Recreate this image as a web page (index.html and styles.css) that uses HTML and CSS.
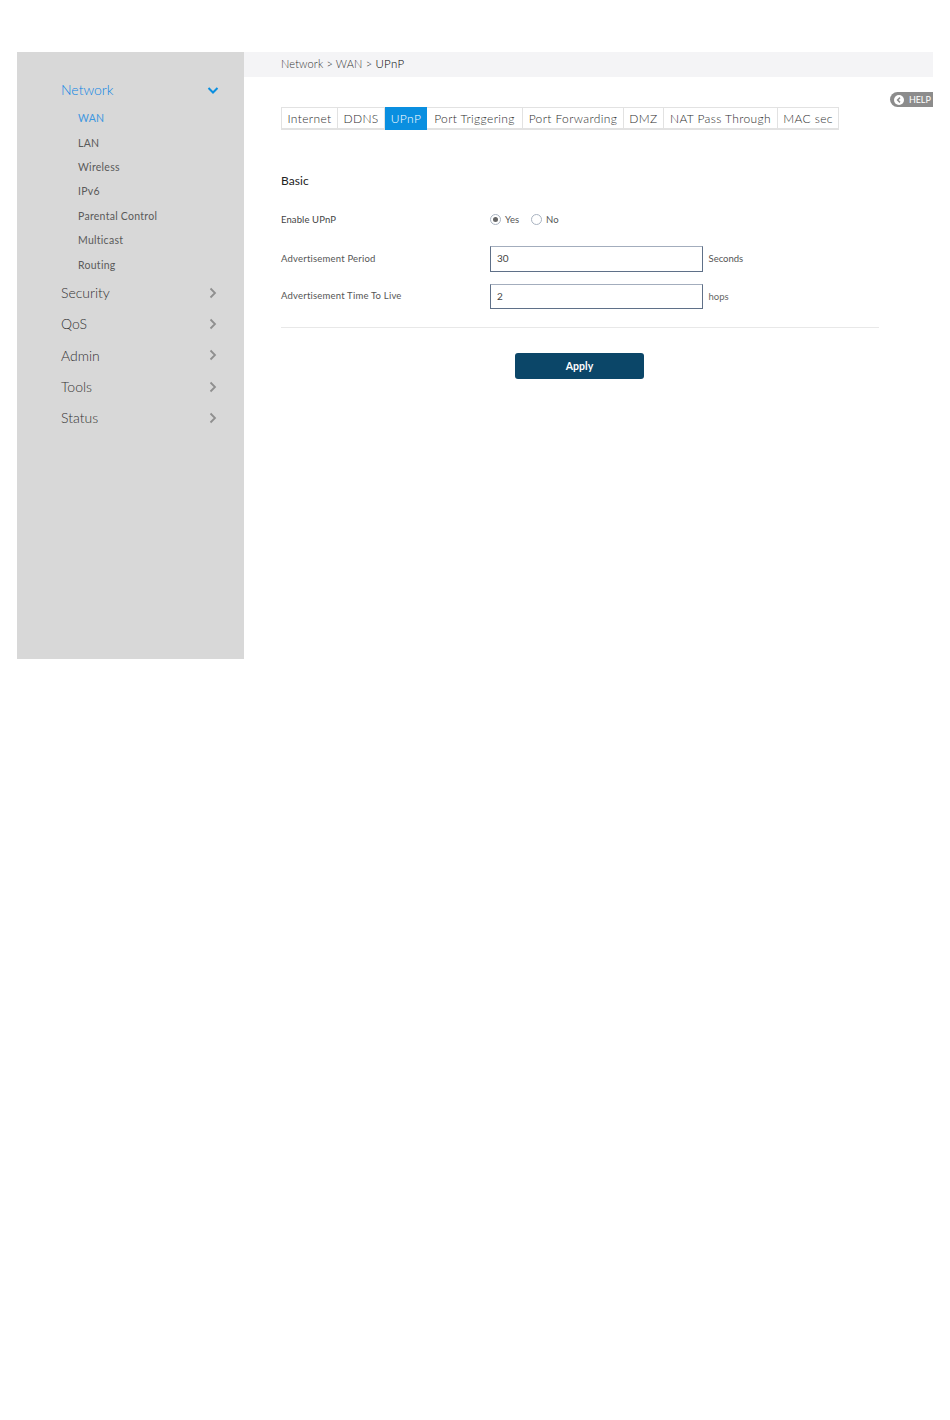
FILE: index.html
```html
<!DOCTYPE html>
<html lang="en">
<head>
<meta charset="utf-8">
<title>UPnP</title>
<link rel="stylesheet" href="styles.css">
</head>
<body>
<div class="shell">
  <nav class="sidebar">
    <div class="nav-top active"><span>Network</span>
      <svg class="chev" width="12" height="12" viewBox="0 0 12 12"><path d="M1.5 4 L6 8.5 L10.5 4" fill="none" stroke="#0a8fe0" stroke-width="2"/></svg>
    </div>
    <ul class="subnav">
      <li class="active">WAN</li>
      <li>LAN</li>
      <li>Wireless</li>
      <li>IPv6</li>
      <li>Parental Control</li>
      <li>Multicast</li>
      <li>Routing</li>
    </ul>
    <div class="nav-top"><span>Security</span><svg class="chev" width="12" height="12" viewBox="0 0 12 12"><path d="M3.5 1.5 L8 6 L3.5 10.5" fill="none" stroke="#8f8f8f" stroke-width="1.8"/></svg></div>
    <div class="nav-top"><span>QoS</span><svg class="chev" width="12" height="12" viewBox="0 0 12 12"><path d="M3.5 1.5 L8 6 L3.5 10.5" fill="none" stroke="#8f8f8f" stroke-width="1.8"/></svg></div>
    <div class="nav-top"><span>Admin</span><svg class="chev" width="12" height="12" viewBox="0 0 12 12"><path d="M3.5 1.5 L8 6 L3.5 10.5" fill="none" stroke="#8f8f8f" stroke-width="1.8"/></svg></div>
    <div class="nav-top"><span>Tools</span><svg class="chev" width="12" height="12" viewBox="0 0 12 12"><path d="M3.5 1.5 L8 6 L3.5 10.5" fill="none" stroke="#8f8f8f" stroke-width="1.8"/></svg></div>
    <div class="nav-top"><span>Status</span><svg class="chev" width="12" height="12" viewBox="0 0 12 12"><path d="M3.5 1.5 L8 6 L3.5 10.5" fill="none" stroke="#8f8f8f" stroke-width="1.8"/></svg></div>
  </nav>
  <main class="main">
    <div class="crumbs">Network &gt; WAN &gt; <b>UPnP</b></div>
    <div class="help">
      <svg width="10" height="10" viewBox="0 0 10 10"><circle cx="5" cy="5" r="5" fill="#fff"/><path d="M6 2.6 L3.6 5 L6 7.4" fill="none" stroke="#8c8c8c" stroke-width="1.5"/></svg>
      <span>HELP</span>
    </div>
    <div class="content">
      <div class="tabs">
        <div class="tab t1">Internet</div>
        <div class="tab t2">DDNS</div>
        <div class="tab t3 on">UPnP</div>
        <div class="tab t4">Port Triggering</div>
        <div class="tab t5">Port Forwarding</div>
        <div class="tab t6">DMZ</div>
        <div class="tab t7">NAT Pass Through</div>
        <div class="tab t8">MAC sec</div>
      </div>
      <h2 class="section">Basic</h2>
      <div class="row row-radio">
        <label class="lbl dark">Enable UPnP</label>
        <div class="radios">
          <span class="radio checked"></span><span class="rtext">Yes</span>
          <span class="radio"></span><span class="rtext">No</span>
        </div>
      </div>
      <div class="row row-a">
        <label class="lbl">Advertisement Period</label>
        <div class="field">30</div>
        <span class="unit">Seconds</span>
      </div>
      <div class="row row-b">
        <label class="lbl">Advertisement Time To Live</label>
        <div class="field short">2</div>
        <span class="unit muted">hops</span>
      </div>
      <hr class="rule">
      <div class="actions"><button class="apply" type="button">Apply</button></div>
    </div>
  </main>
</div>
</body>
</html>
```
FILE: styles.css
```css
* { box-sizing: border-box; }
html, body { margin: 0; padding: 0; background: #fff; }
body {
  padding: 52px 17px 0;
  font-family: "Lato", "Liberation Sans", sans-serif;
  color: #444;
}
.shell { display: flex; height: 607px; }

.sidebar {
  width: 227px;
  flex: none;
  background: #d8d8d8;
  padding: 22px 25px 0 44px;
}
.nav-top {
  display: flex;
  justify-content: space-between;
  align-items: center;
  height: 31.3px;
  font-size: 14px;
  font-weight: 300;
  color: #333;
}
.nav-top.active { color: #0c84e4; height: 32.3px; padding-bottom: 1px; }
.subnav { list-style: none; margin: 0; padding: 0 0 0 17px; }
.subnav li {
  height: 24.4px;
  line-height: 24.4px;
  font-size: 10.5px;
  letter-spacing: 0.27px;
  color: #5a5a5a;
}
.subnav li.active { color: #3d97e0; }

.main { flex: 1; position: relative; min-width: 0; }
.crumbs {
  height: 25px;
  line-height: 24px;
  padding-left: 37px;
  background: #f4f4f6;
  font-size: 11px;
  font-weight: 300;
  letter-spacing: 0.15px;
  color: #333;
}
.crumbs b { font-weight: 300; font-size: 11.5px; letter-spacing: 0.35px; color: #000; }
.help {
  position: absolute;
  top: 40px;
  right: 0;
  width: 43px;
  height: 15px;
  display: flex;
  align-items: center;
  gap: 5px;
  padding-left: 4px;
  background: #8c8c8c;
  border-radius: 8px 0 0 8px;
  color: #fff;
  font-size: 9px;
  letter-spacing: -0.1px;
}

.content { padding: 30px 54px 0 37px; }
.tabs {
  display: flex;
  width: 558px;
  height: 23px;
  border: 1px solid #e2e2e2;
  border-bottom-width: 2px;
}
.tab {
  display: flex;
  align-items: center;
  justify-content: center;
  font-size: 12px;
  font-weight: 300;
  letter-spacing: 0.38px;
  color: #2e2e2e;
  border-right: 1px solid #e2e2e2;
  white-space: nowrap;
}
.tab:last-child { border-right: 0; }
.tab.on { background: #0a8fe0; color: #fff; margin: -1px 0 -2px; border-right: 0; }
.t1 { width: 56px; }
.t2 { width: 47px; }
.t3 { width: 42px; }
.t4 { width: 96px; }
.t5 { width: 101px; }
.t6 { width: 40px; }
.t7 { width: 114px; }
.t8 { width: 60px; }

.section {
  margin: 43px 0 0;
  height: 16px;
  line-height: 16px;
  font-size: 12px;
  font-weight: 400;
  letter-spacing: 0.1px;
  color: #222;
}
.row { display: flex; align-items: center; }
.row-radio { margin-top: 22px; height: 16px; }
.row-a { margin-top: 19px; height: 26px; }
.row-b { margin-top: 12px; height: 25px; }
.lbl {
  width: 209px;
  flex: none;
  font-size: 9.5px;
  letter-spacing: 0.2px;
  color: #555;
  position: relative;
  top: -1px;
}
.row-radio .lbl { top: 0; letter-spacing: 0.1px; color: #444; }
.radios { display: flex; align-items: center; }
.radio {
  width: 11px;
  height: 11px;
  border: 1px solid #a9b3c1;
  border-radius: 50%;
  display: flex;
  align-items: center;
  justify-content: center;
}
.radio.checked::after {
  content: "";
  width: 5px;
  height: 5px;
  border-radius: 50%;
  background: #666;
}
.rtext { font-size: 9.5px; color: #555; margin: 0 12px 0 4px; }
.field {
  width: 213px;
  height: 100%;
  flex: none;
  display: flex;
  align-items: center;
  padding: 0 0 2px 6px;
  border: 1px solid;
  border-color: #a3adbd #5f7088 #5f7088 #5f7088;
  font-size: 10px;
  color: #444;
}
.unit { margin-left: 5.5px; font-size: 9.5px; color: #555; position: relative; top: -1px; }
.unit.muted { color: #666; top: 0; }
.rule { margin: 18px 0 0; border: 0; border-top: 1px solid #e8e8e8; }
.actions { display: flex; justify-content: center; margin-top: 25px; }
.apply {
  width: 129px;
  height: 26px;
  margin-right: 1px;
  padding: 0;
  border: 0;
  border-radius: 3px;
  background: #0b4668;
  color: #fff;
  font: 700 10.5px "Lato", "Liberation Sans", sans-serif;
}
```
